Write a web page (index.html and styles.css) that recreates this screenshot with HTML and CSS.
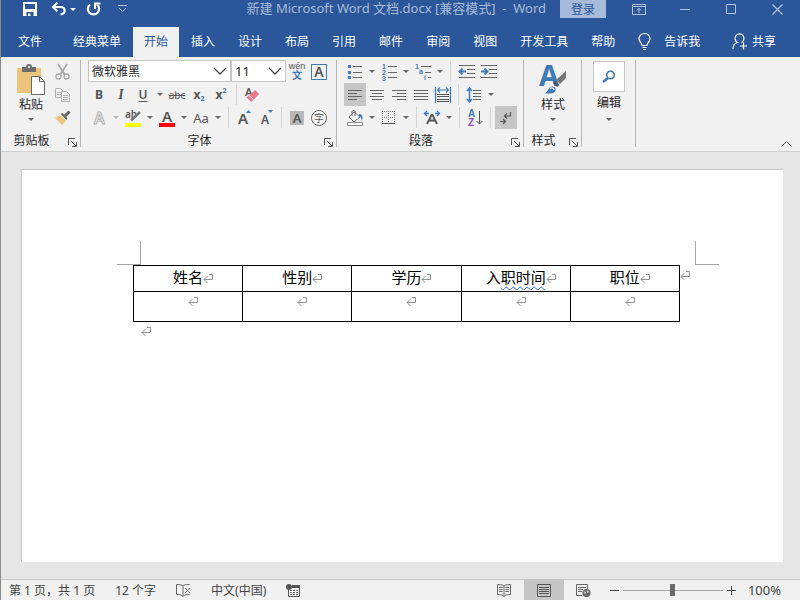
FILE: index.html
```html
<!DOCTYPE html>
<html lang="zh-CN">
<head>
<meta charset="UTF-8">
<meta name="viewport" content="width=device-width, initial-scale=1.0">
<title>新建 Microsoft Word 文档.docx</title>
<link rel="stylesheet" href="styles.css">
</head>
<body>
<svg class="defs" aria-hidden="true">
    <symbol id="arrow" viewBox="0 0 6 3"><path d="M0 0h6L3 3z" fill="currentColor"/></symbol>
    <symbol id="chevron" viewBox="0 0 14 8"><path d="M1 1l6 6 6-6" fill="none" stroke="#444" stroke-width="1.3"/></symbol>
    <symbol id="launcher" viewBox="0 0 9 9"><path d="M.5 7V.5H7M3 3l5 5M8.500 4v4.500H4" fill="none" stroke="#555"/></symbol>
    <symbol id="mark" viewBox="0 0 10 9"><path d="M6 .5h3.500v5H1M4.500 2L1 5.500 4.500 9" fill="none" stroke="#929292"/></symbol>
</svg>
<div class="window">
    <header class="titlebar">
        <div class="quick">
            <button aria-label="保存"><svg width="14" height="14" viewBox="0 0 14 14"><path d="M0 0h14v14h-3.500v-4h-7v4H0zM2 2v5h10V2z" fill="#fff" fill-rule="evenodd"/><path d="M5 11.500h2.500V14H5z" fill="#fff"/></svg></button>
            <button class="undo" aria-label="撤消"><svg width="16" height="14" viewBox="0 0 16 14"><path d="M2 5h7.500c5 0 6 6.500 0 7.500M6.500 .8L2 5l4.500 4.200" fill="none" stroke="#fff" stroke-width="2.200"/></svg></button>
            <button class="dd" aria-label="撤消选项"><svg width="6" height="3"><use href="#arrow"/></svg></button>
            <button class="redo" aria-label="重复"><svg width="15" height="15" viewBox="0 0 15 15"><path d="M4 2.500A5.600 5.600 0 1 0 11 2.500" fill="none" stroke="#fff" stroke-width="2.200"/><path d="M9 7V1.500h5.500" fill="none" stroke="#fff" stroke-width="2"/></svg></button>
            <button class="more" aria-label="自定义快速访问工具栏"><svg width="9" height="8" viewBox="0 0 9 8"><path d="M0 .5h9M1 3l3.500 3.500L8 3" fill="none" stroke="#b4c4de"/></svg></button>
        </div>
        <div class="doc-title">新建 Microsoft Word 文档.docx [兼容模式] &nbsp;-&nbsp; Word</div>
        <button class="login">登录</button>
        <div class="controls">
            <button aria-label="功能区显示选项"><svg width="14" height="11" viewBox="0 0 14 11"><path d="M.5 .5h13v10H.5zM.5 2.500h13M7 9V4.500M4.800 6.500L7 4.300l2.200 2.200" fill="none" stroke="#b4c4de"/></svg></button>
            <button aria-label="最小化"><svg width="10" height="11" viewBox="0 0 10 11"><path d="M0 5.500h10" stroke="#b4c4de"/></svg></button>
            <button aria-label="最大化"><svg width="10" height="10" viewBox="0 0 10 10"><path d="M.5 .5h9v9h-9z" fill="none" stroke="#b4c4de"/></svg></button>
            <button aria-label="关闭"><svg width="11" height="11" viewBox="0 0 11 11"><path d="M.5 .5l10 10M10.500 .5l-10 10" stroke="#b4c4de" stroke-width="1.200"/></svg></button>
        </div>
    </header>
    <nav class="tabs">
        <a href="#" class="file">文件</a>
        <a href="#">经典菜单</a>
        <a href="#" class="active">开始</a>
        <a href="#">插入</a>
        <a href="#">设计</a>
        <a href="#">布局</a>
        <a href="#">引用</a>
        <a href="#">邮件</a>
        <a href="#">审阅</a>
        <a href="#">视图</a>
        <a href="#">开发工具</a>
        <a href="#">帮助</a>
        <a href="#" class="tell"><svg width="13" height="17" viewBox="0 0 13 17"><path d="M4 12.500c0-3-3-3.500-3-7a5.500 5 0 0 1 11 0c0 3.500-3 4-3 7zM4.500 14.500h4M5 16.500h3" fill="none" stroke="#fff" stroke-width="1.200"/></svg>告诉我</a>
        <a href="#" class="share"><svg width="16" height="17" viewBox="0 0 16 17"><path d="M1 16c0-4 2-6 4.500-6.500a4.500 4.500 0 1 1 4 0M8 13h7M11.500 9.500v7" fill="none" stroke="#fff" stroke-width="1.200"/></svg>共享</a>
    </nav>
    <section class="ribbon">
        <div class="group clipboard">
            <div class="group-body">
                <button class="big">
                    <svg width="30" height="32" viewBox="0 0 30 32"><path d="M1 4h24v25H1z" fill="#ecc57c"/><path d="M6 3h4a3 3 0 0 1 6 0h4v5H6z" fill="#6d6d6d"/><circle cx="13" cy="3" r="1" fill="#fff"/><path d="M15.500 12.500h8l5 5v13h-13z" fill="#fff" stroke="#666"/><path d="M23.500 12.500v5h5" fill="none" stroke="#666"/></svg>
                    <span>粘贴</span>
                    <svg width="6" height="3"><use href="#arrow"/></svg>
                </button>
                <div class="stack">
                    <button class="btn" aria-label="剪切"><svg width="16" height="16" viewBox="0 0 16 16"><path d="M3 0l7 11M12 0L5 11" fill="none" stroke="#a8a8a8" stroke-width="1.800"/><circle cx="3.500" cy="12.500" r="2.500" fill="none" stroke="#a8a8a8" stroke-width="1.300"/><circle cx="11.500" cy="12.500" r="2.500" fill="none" stroke="#a8a8a8" stroke-width="1.300"/></svg></button>
                    <button class="btn" aria-label="复制"><svg width="16" height="14" viewBox="0 0 16 14"><path d="M.5 .5h5l3 3v6h-8z" fill="#f1f1f1" stroke="#b0b0b0"/><path d="M2 4.500h4M2 6.500h4" stroke="#b0b0b0"/><path d="M6.500 3.500h5l3 3v7h-8z" fill="#f1f1f1" stroke="#b0b0b0"/><path d="M8 7.500h5M8 9.500h5M8 11.500h5" stroke="#b0b0b0"/></svg></button>
                    <button class="btn" aria-label="格式刷"><svg width="16" height="15" viewBox="0 0 16 15"><path d="M0 8l5-3 6 6-4 4z" fill="#ecc57c"/><path d="M5.500 4l2-1 5 5-1 2z" fill="#666"/><path d="M10 6l4.500-4.500" stroke="#666" stroke-width="3"/></svg></button>
                </div>
            </div>
            <div class="group-foot"><span>剪贴板</span><button aria-label="剪贴板选项"><svg width="9" height="9"><use href="#launcher"/></svg></button></div>
        </div>

        <div class="group">
            <div class="row">
                <div class="combo font-name">
                    <select aria-label="字体"><option>微软雅黑</option></select>
                    <svg width="14" height="8"><use href="#chevron"/></svg>
                </div>
                <div class="combo font-size">
                    <select aria-label="字号"><option>11</option></select>
                    <svg width="14" height="8"><use href="#chevron"/></svg>
                </div>
                <button class="btn pinyin" aria-label="拼音指南"><span>wén</span><b>文</b></button>
                <button class="btn" aria-label="字符边框"><span class="boxed">A</span></button>
            </div>
            <div class="row">
                <button class="btn bold">B</button>
                <button class="btn italic">I</button>
                <button class="btn under">U</button>
                <button class="dd" aria-label="下划线选项"><svg width="6" height="3"><use href="#arrow"/></svg></button>
                <button class="btn strike">abc</button>
                <button class="btn script">x<sub>2</sub></button>
                <button class="btn script">x<sup>2</sup></button>
                <i class="sep"></i>
                <button class="btn" aria-label="清除格式"><svg width="16" height="16" viewBox="0 0 16 16"><text x="1" y="9" class="glyph" font-size="11">A</text><path d="M11 3l4 4-7.500 8-5-4.500z" fill="#e8788c"/><path d="M5 8.500l4.500 4" stroke="#f1f1f1" stroke-width="1"/></svg></button>
            </div>
            <div class="row">
                <button class="btn" aria-label="文本效果"><svg width="16" height="16" viewBox="0 0 16 16"><text x="3" y="14" class="outline" font-size="16">A</text></svg></button>
                <button class="dd pale" aria-label="文本效果选项"><svg width="6" height="3"><use href="#arrow"/></svg></button>
                <button class="btn" aria-label="突出显示"><svg width="18" height="18" viewBox="0 0 18 18"><text x="1" y="9" class="glyph" font-size="10">ab</text><path d="M7 11.500L16 3" stroke="#777" stroke-width="2.500"/><path d="M1 14h16v4H1z" fill="#ff0"/></svg></button>
                <button class="dd" aria-label="突出显示选项"><svg width="6" height="3"><use href="#arrow"/></svg></button>
                <button class="btn" aria-label="字体颜色"><svg width="18" height="18" viewBox="0 0 18 18"><text x="4" y="13" class="glyph" font-size="15">A</text><path d="M1 14h16v4H1z" fill="#f00"/></svg></button>
                <button class="dd" aria-label="字体颜色选项"><svg width="6" height="3"><use href="#arrow"/></svg></button>
                <button class="btn case">Aa</button>
                <button class="dd" aria-label="大小写选项"><svg width="6" height="3"><use href="#arrow"/></svg></button>
                <i class="sep"></i>
                <button class="btn" aria-label="增大字号"><svg width="16" height="16" viewBox="0 0 16 16"><text x="2" y="14" class="glyph" font-size="15">A</text><path d="M10 3l2.500-3L15 3z" fill="#3f7ab5"/></svg></button>
                <button class="btn" aria-label="减小字号"><svg width="16" height="16" viewBox="0 0 16 16"><text x="3" y="14" class="glyph" font-size="12">A</text><path d="M10 0h5l-2.500 3z" fill="#3f7ab5"/></svg></button>
                <i class="sep"></i>
                <button class="btn" aria-label="字符底纹"><span class="shaded">A</span></button>
                <button class="btn" aria-label="带圈字符"><span class="circled">字</span></button>
            </div>
            <div class="group-foot"><span>字体</span><button aria-label="字体选项"><svg width="9" height="9"><use href="#launcher"/></svg></button></div>
        </div>

        <div class="group">
            <div class="row">
                <button class="btn" aria-label="项目符号"><svg width="16" height="16" viewBox="0 0 16 16"><path d="M1 1h3v3H1zM1 7h3v3H1zM1 12h3v3H1z" fill="#3f7ab5"/><path d="M6 2.500h9M6 8.500h9M6 13.500h9" stroke="#666"/></svg></button>
                <button class="dd" aria-label="项目符号选项"><svg width="6" height="3"><use href="#arrow"/></svg></button>
                <button class="btn" aria-label="编号"><svg width="16" height="18" viewBox="0 0 16 18"><g class="num"><text x="1" y="6">1</text><text x="1" y="12">2</text><text x="1" y="18">3</text></g><path d="M7 3.500h9M7 9.500h9M7 14.500h9" stroke="#666"/></svg></button>
                <button class="dd" aria-label="编号选项"><svg width="6" height="3"><use href="#arrow"/></svg></button>
                <button class="btn" aria-label="多级列表"><svg width="18" height="18" viewBox="0 0 18 18"><g class="num"><text x="1" y="6">1</text><text x="5" y="11">a</text><text x="10" y="17">i</text></g><path d="M7 3.500h10M11 9.500h6M14 14.500h3" stroke="#666"/></svg></button>
                <button class="dd" aria-label="多级列表选项"><svg width="6" height="3"><use href="#arrow"/></svg></button>
                <i class="sep"></i>
                <button class="btn" aria-label="减少缩进量"><svg width="17" height="13" viewBox="0 0 17 13"><path d="M1 .5h16M9 4.500h8M9 8.500h8M1 12.500h16" stroke="#666"/><path d="M2 6.500h6M4.500 3.500l-3 3 3 3" fill="none" stroke="#3f7ab5" stroke-width="1.800"/></svg></button>
                <button class="btn" aria-label="增加缩进量"><svg width="17" height="13" viewBox="0 0 17 13"><path d="M1 .5h16M9 4.500h8M9 8.500h8M1 12.500h16" stroke="#666"/><path d="M1 6.500h6M4.500 3.500l3 3-3 3" fill="none" stroke="#3f7ab5" stroke-width="1.800"/></svg></button>
            </div>
            <div class="row">
                <button class="btn on" aria-label="左对齐"><svg width="14" height="12" viewBox="0 0 14 12"><path d="M0 1.500h14M0 4.500h9M0 7.500h14M0 10.500h9" stroke="#666"/></svg></button>
                <button class="btn" aria-label="居中"><svg width="14" height="12" viewBox="0 0 14 12"><path d="M0 1.500h14M2 4.500h10M0 7.500h14M2 10.500h10" stroke="#666"/></svg></button>
                <button class="btn" aria-label="右对齐"><svg width="14" height="12" viewBox="0 0 14 12"><path d="M0 1.500h14M5 4.500h9M0 7.500h14M5 10.500h9" stroke="#666"/></svg></button>
                <button class="btn" aria-label="两端对齐"><svg width="14" height="12" viewBox="0 0 14 12"><path d="M0 1.500h14M0 4.500h14M0 7.500h14M0 10.500h14" stroke="#666"/></svg></button>
                <button class="btn" aria-label="分散对齐"><svg width="16" height="16" viewBox="0 0 16 16"><path d="M.5 0v16M15.500 0v16M2.500 3h11M5 .5L2.500 3 5 5.500M11 .5L13.500 3 11 5.500" fill="none" stroke="#3f7ab5" stroke-width="1.200"/><path d="M2 7.500h12M2 9.500h12M2 12.500h12M2 14.500h12" stroke="#555"/></svg></button>
                <i class="sep"></i>
                <button class="btn" aria-label="行距"><svg width="16" height="16" viewBox="0 0 16 16"><path d="M3.500 1v14M1 4l2.500-3L6 4M1 12l2.500 3L6 12" fill="none" stroke="#3f7ab5" stroke-width="1.500"/><path d="M7 3.500h8M7 6.500h8M7 9.500h8M7 12.500h8" stroke="#666"/></svg></button>
                <button class="dd" aria-label="行距选项"><svg width="6" height="3"><use href="#arrow"/></svg></button>
            </div>
            <div class="row">
                <button class="btn" aria-label="底纹"><svg width="18" height="16" viewBox="0 0 18 16"><path d="M8 2l6 5-6 5-5-5z" fill="#fff" stroke="#666"/><path d="M6 6V2c0-2 3-2 3 0v4" fill="none" stroke="#666"/><path d="M13 4c4 0 4 3 3 7-1-3-1-4-3-5z" fill="#3f7ab5"/><path d="M1.500 12.500h15v3h-15z" fill="#fff" stroke="#888"/></svg></button>
                <button class="dd" aria-label="底纹选项"><svg width="6" height="3"><use href="#arrow"/></svg></button>
                <button class="btn" aria-label="边框"><svg width="14" height="14" viewBox="0 0 14 14"><path d="M.5 0v13M6.500 0v13M12.500 0v13M0 .5h13M0 6.500h13" stroke="#777" stroke-dasharray="1 1"/><path d="M0 12.500h13" stroke="#555"/></svg></button>
                <button class="dd" aria-label="边框选项"><svg width="6" height="3"><use href="#arrow"/></svg></button>
                <i class="sep"></i>
                <button class="btn" aria-label="中文版式"><svg width="18" height="15" viewBox="0 0 18 15"><path d="M4 14l4.500-9h1L14 14M6 10.500h6" fill="none" stroke="#555" stroke-width="1.800"/><path d="M2 3.500h4M4 1L1.500 3.500 4 6M12 3.500h4M14 1l2.500 2.500L14 6" fill="none" stroke="#3f7ab5" stroke-width="1.400"/></svg></button>
                <button class="dd" aria-label="中文版式选项"><svg width="6" height="3"><use href="#arrow"/></svg></button>
                <i class="sep"></i>
                <button class="btn" aria-label="排序"><svg width="15" height="18" viewBox="0 0 15 18"><text x="0" y="8" class="sort-a">A</text><text x="0" y="17" class="sort-z">Z</text><path d="M11.500 2v13M8.500 12l3 3 3-3" fill="none" stroke="#555"/></svg></button>
                <i class="sep"></i>
                <button class="btn on" aria-label="显示编辑标记"><svg width="14" height="14" viewBox="0 0 14 14"><path d="M11.500 1v4H6M8 2.500L5.500 5 8 7.500M1 10.500h5M4 8l2.500 2.500L4 13" fill="none" stroke="#555" stroke-width="1.200"/></svg></button>
            </div>
            <div class="group-foot"><span>段落</span><button aria-label="段落选项"><svg width="9" height="9"><use href="#launcher"/></svg></button></div>
        </div>

        <div class="group styles">
            <div class="group-body">
                <button class="big">
                    <svg width="30" height="32" viewBox="0 0 30 32"><text x="1" y="22" class="style-a">A</text><path d="M28 7v7l-6 6-4-4z" fill="#777"/><path d="M17 17l4 4-2 2-4-4z" fill="#555"/><path d="M5 30c5-1 4-8 10-8 5 1 4 8-3 8z" fill="#3f7ab5" stroke="#f1f1f1"/><path d="M12 25c1-2 4-1 4 1" fill="none" stroke="#fff" stroke-width="1.200"/></svg>
                    <span>样式</span>
                    <svg width="6" height="3"><use href="#arrow"/></svg>
                </button>
            </div>
            <div class="group-foot"><span>样式</span><button aria-label="样式选项"><svg width="9" height="9"><use href="#launcher"/></svg></button></div>
        </div>

        <div class="group edit">
            <button class="big">
                <span class="tile"><svg width="14" height="14" viewBox="0 0 14 14"><circle cx="8.500" cy="5" r="3.800" fill="none" stroke="#3f7ab5" stroke-width="1.600"/><path d="M6 8l-5 4" stroke="#3f7ab5" stroke-width="2.500"/></svg></span>
                <span>编辑</span>
                <svg width="6" height="3"><use href="#arrow"/></svg>
            </button>
        </div>
        <button class="collapse" aria-label="折叠功能区"><svg width="11" height="6" viewBox="0 0 11 6"><path d="M.5 5.500l5-5 5 5" fill="none" stroke="#555"/></svg></button>
    </section>

    <main class="workspace">
        <article class="page">
            <div class="corners"><i class="corner left"></i><i class="corner right"></i></div>
            <div class="table-line">
                <div class="table-box">
                    <table>
                        <thead>
                            <tr>
                                <th>姓名<svg class="mark"><use href="#mark"/></svg></th>
                                <th>性别<svg class="mark"><use href="#mark"/></svg></th>
                                <th>学历<svg class="mark"><use href="#mark"/></svg></th>
                                <th>入<span class="grammar">职时间</span><svg class="mark"><use href="#mark"/></svg></th>
                                <th>职位<svg class="mark"><use href="#mark"/></svg></th>
                            </tr>
                        </thead>
                        <tbody>
                            <tr>
                                <td><svg class="mark"><use href="#mark"/></svg></td>
                                <td><svg class="mark"><use href="#mark"/></svg></td>
                                <td><svg class="mark"><use href="#mark"/></svg></td>
                                <td><svg class="mark"><use href="#mark"/></svg></td>
                                <td><svg class="mark"><use href="#mark"/></svg></td>
                            </tr>
                        </tbody>
                    </table>
                </div>
                <svg class="mark row-end"><use href="#mark"/></svg>
            </div>
            <p><svg class="mark"><use href="#mark"/></svg></p>
        </article>
    </main>

    <footer class="status">
        <span>第 1 页，共 1 页</span>
        <span>12 个字</span>
        <button aria-label="校对"><svg width="15" height="13" viewBox="0 0 15 13"><path d="M7 2C5 .5 3 .5 .5 .5v10c3 0 5 0 6.500 2zM7 2C8 1 9 .5 13.500 .5M7 12.500c1-1.500 3-2 6.500-2M9 4l5 5M14 4L9 9" fill="none" stroke="#666"/></svg></button>
        <span>中文(中国)</span>
        <button aria-label="宏"><svg width="14" height="13" viewBox="0 0 14 13"><path d="M2.500 5v7.500h11v-10H7" fill="#fff" stroke="#555"/><path d="M6 1h8v3H6z" fill="#555"/><circle cx="3" cy="3" r="3" fill="#555"/><path d="M4 6.500h8M4 8.500h8M4 10.500h8" stroke="#666" stroke-dasharray="2 1"/></svg></button>
        <div class="views">
            <button aria-label="阅读视图"><svg width="14" height="13" viewBox="0 0 14 13"><path d="M7 2C5 .5 3 .5 .5 .5v10c3 0 5 0 6.500 2 1.500-2 3.500-2 6.500-2V.5C11 .5 9 .5 7 2zv10M2 3.500h3.500M2 5.500h3.500M2 7.500h3.500M8.500 3.500H12M8.500 5.500H12M8.500 7.500H12" fill="none" stroke="#666"/></svg></button>
            <button class="on" aria-label="页面视图"><svg width="14" height="13" viewBox="0 0 14 13"><path d="M.5 .5h13v12H.5zM2 3.500h10M2 5.500h10M2 7.500h10M2 9.500h10" fill="none" stroke="#555"/></svg></button>
            <button aria-label="Web 版式视图"><svg width="15" height="13" viewBox="0 0 15 13"><path d="M6 11.500H.5V.5h11V5M2 3.500h8M2 5.500h5M2 7.500h4" fill="none" stroke="#666"/><circle cx="10.500" cy="9" r="4" fill="#666"/><path d="M8 7l2 1-1 3zM11 6l2 2-2 1z" fill="#ddd"/></svg></button>
        </div>
        <div class="zoom">
            <button aria-label="缩小"><svg width="9" height="9" viewBox="0 0 9 9"><path d="M0 4.500h9" stroke="#444"/></svg></button>
            <input type="range" min="0" max="100" value="50" aria-label="显示比例">
            <button aria-label="放大"><svg width="9" height="9" viewBox="0 0 9 9"><path d="M0 4.500h9M4.500 0v9" stroke="#444"/></svg></button>
            <span>100%</span>
        </div>
    </footer>
</div>
</body>
</html>
```

FILE: styles.css
```css
* {
    box-sizing: border-box;
}
body {
    margin: 0;
    font-family: "Noto Sans", "Noto Sans CJK SC", sans-serif;
    font-size: 12px;
    color: #262626;
}
button, select {
    font: inherit;
    color: inherit;
    background: none;
    border: 0;
    padding: 0;
    margin: 0;
}
button {
    display: flex;
    align-items: center;
    justify-content: center;
    cursor: pointer;
}
svg {
    display: block;
    flex: none;
    overflow: visible;
}
.defs {
    position: absolute;
    width: 0;
    height: 0;
}
.window {
    display: flex;
    flex-direction: column;
    min-height: 100vh;
    border-left: 1px solid #8a8a8a;
}

/* title bar */
.titlebar {
    display: flex;
    height: 27px;
    padding-bottom: 9px;
    background: #2b579a;
    color: #a9bbd8;
}
.quick {
    display: flex;
    align-items: center;
    padding-left: 22px;
    color: #fff;
}
.quick .dd {
    color: #fff;
}
.undo {
    margin-left: 14px;
}
.redo {
    margin-left: 7px;
}
.more {
    margin-left: 17px;
}
.doc-title {
    margin-left: auto;
    margin-right: 14px;
    font-size: 13px;
    line-height: 17px;
    white-space: nowrap;
}
.login {
    width: 46px;
    margin-right: 10px;
    background: #a6bad9;
    color: #2b579a;
}
.controls {
    display: flex;
}
.controls button {
    width: 46px;
}

/* tabs */
.tabs {
    display: flex;
    gap: 1px;
    height: 30px;
    padding-left: 6px;
    background: #2b579a;
}
.tabs a {
    display: flex;
    align-items: center;
    padding: 0 11px 2px;
    color: #fff;
    text-decoration: none;
    white-space: nowrap;
}
.tabs .file {
    margin-right: 8px;
}
.tabs .active {
    background: #f1f1f1;
    color: #2b579a;
}
.tabs .tell {
    gap: 13px;
}
.tabs .share {
    gap: 4px;
    margin-left: auto;
    padding-right: 24px;
}

/* ribbon */
.ribbon {
    display: flex;
    padding: 3px 0 4px;
    background: #f1f1f1;
    border-bottom: 1px solid #d0d0d0;
}
.group {
    display: flex;
    flex-direction: column;
    padding: 0 6px 0 7px;
    border-right: 1px solid #b4b4b4;
}
.group-body {
    display: flex;
    justify-content: center;
    height: 69px;
}
.group-foot {
    display: flex;
    align-items: flex-end;
    height: 18px;
    margin: 0 -6px 0 -7px;
    line-height: 13px;
}
.group-foot span {
    flex: 1;
    text-align: center;
}
.group-foot button {
    justify-content: flex-end;
    width: 18px;
    padding-right: 3px;
}
.row {
    display: flex;
    height: 23px;
}
.btn {
    width: 22px;
    height: 23px;
    color: #555;
}
.on {
    background: #c6c6c6;
}
.dd {
    width: 12px;
    color: #666;
}
.pale {
    color: #b8b8b8;
}
.sep {
    width: 1px;
    margin: 1px 4px;
    background: #d4d4d4;
}
.clipboard {
    width: 80px;
}
.styles {
    width: 58px;
}
.edit {
    width: 54px;
}
.clipboard .group-body {
    justify-content: space-between;
}
.clipboard .big {
    padding-left: 8px;
}
.big {
    flex-direction: column;
    justify-content: flex-start;
    gap: 1px;
    padding-top: 4px;
    line-height: 16px;
}
.big > svg:last-child {
    margin-top: 4px;
    color: #666;
}
.edit .big {
    gap: 3px;
    padding-top: 1px;
}
.tile {
    display: flex;
    align-items: center;
    justify-content: center;
    width: 32px;
    height: 31px;
    background: #fff;
    border: 1px solid #c6c6c6;
}
.combo {
    display: flex;
    align-items: center;
    height: 22px;
    border: 1px solid #c6c6c6;
    background: #fff;
}
.combo select {
    appearance: none;
    flex: 1;
    height: 20px;
    padding-left: 3px;
}
.combo svg {
    margin-right: 3px;
}
.font-name {
    width: 143px;
}
.font-size {
    width: 55px;
    font-size: 13px;
}
.pinyin {
    flex-direction: column;
    font-family: "Liberation Sans", "Noto Sans CJK SC", sans-serif;
    font-size: 9px;
    line-height: 9px;
}
.pinyin b {
    font-size: 10px;
    line-height: 10px;
    color: #3f7ab5;
}
.boxed {
    width: 16px;
    height: 16px;
    border: 1px solid #3f7ab5;
    font-size: 14px;
    font-weight: 600;
    line-height: 14px;
}
.shaded {
    width: 14px;
    height: 14px;
    background: #b8b8b8;
    font-size: 13px;
    font-weight: 600;
    line-height: 14px;
}
.circled {
    width: 16px;
    height: 16px;
    border: 1px solid #666;
    border-radius: 50%;
    background: #fff;
    font-size: 10px;
    line-height: 14px;
}
.bold {
    font-weight: 700;
}
.italic {
    font-family: "Liberation Serif", serif;
    font-size: 14px;
    font-style: italic;
    font-weight: 700;
}
.under {
    font-weight: 600;
    text-decoration: underline;
    text-underline-offset: 2px;
}
.strike {
    font-size: 10px;
    text-decoration: line-through;
}
.script {
    font-weight: 700;
}
.script sub, .script sup {
    font-size: 7px;
    line-height: 7px;
    color: #3f7ab5;
}
.script sub {
    align-self: flex-end;
    padding-bottom: 4px;
}
.script sup {
    align-self: flex-start;
    padding-top: 4px;
}
.case {
    font-size: 13px;
}
.glyph {
    fill: #555;
    font-weight: 600;
}
.outline {
    fill: #f8f8f8;
    stroke: #b0b0b0;
    font-weight: 600;
}
.num {
    fill: #3f7ab5;
    font-family: "Liberation Sans", sans-serif;
    font-size: 7px;
    font-weight: 700;
}
.sort-a, .sort-z {
    font-family: "Liberation Sans", sans-serif;
    font-size: 10px;
    font-weight: 700;
}
.sort-a {
    fill: #3f7ab5;
}
.sort-z {
    fill: #8a4fb0;
}
.style-a {
    fill: #3f7ab5;
    font-size: 29px;
    font-weight: 700;
}
.collapse {
    align-self: flex-end;
    margin-left: auto;
    margin-right: 8px;
}

/* document */
.workspace {
    display: flex;
    flex: 1;
    padding: 17px 17px 17px 20px;
    background: #e6e6e6;
}
.page {
    flex: 1;
    padding-top: 71px;
    background: #fff;
    border-top: 1px solid #c8c8c8;
    border-left: 1px solid #c8c8c8;
}
.corners {
    display: flex;
    justify-content: space-between;
    margin: 0 64px 0 95px;
}
.corner {
    width: 24px;
    height: 24px;
    border-bottom: 1px solid #a6a6a6;
}
.corner.left {
    border-right: 1px solid #a6a6a6;
}
.corner.right {
    border-left: 1px solid #a6a6a6;
}
.table-line {
    display: flex;
    margin: 0 93px 0 111px;
}
.table-box {
    flex: 1;
}
table {
    width: 100%;
    table-layout: fixed;
    border-collapse: collapse;
    color: #000;
}
th, td {
    padding: 0;
    border: 1px solid #000;
    text-align: center;
    vertical-align: top;
}
th {
    height: 26px;
    font-size: 15px;
    font-weight: 400;
    line-height: 23px;
}
td {
    height: 30px;
    line-height: 19px;
}
.mark {
    display: inline-block;
    width: 10px;
    height: 9px;
    margin-right: -10px;
}
.row-end {
    margin: 6px 0 0;
}
.grammar {
    text-decoration: underline wavy #2f6fe4 1px;
    text-decoration-skip-ink: none;
    text-underline-offset: 3px;
}
.page p {
    margin: 2px 0 0 119px;
    line-height: 15px;
}

/* status bar */
.status {
    display: flex;
    align-items: center;
    gap: 20px;
    height: 21px;
    padding: 0 19px 0 8px;
    background: #f1f1f1;
    border-top: 1px solid #c6c6c6;
    color: #444;
    white-space: nowrap;
}
.views {
    display: flex;
    align-self: stretch;
    margin-left: auto;
}
.views button {
    width: 40px;
}
.zoom {
    display: flex;
    align-items: center;
    gap: 4px;
    margin-left: -14px;
}
.zoom span {
    margin-left: 8px;
    font-size: 13px;
}
.zoom input {
    appearance: none;
    width: 100px;
    height: 12px;
    margin: 0;
    background: linear-gradient(#a6a6a6, #a6a6a6) center / 100% 1px no-repeat;
}
.zoom input::-webkit-slider-thumb {
    appearance: none;
    width: 5px;
    height: 12px;
    background: #6a6a6a;
}
```
